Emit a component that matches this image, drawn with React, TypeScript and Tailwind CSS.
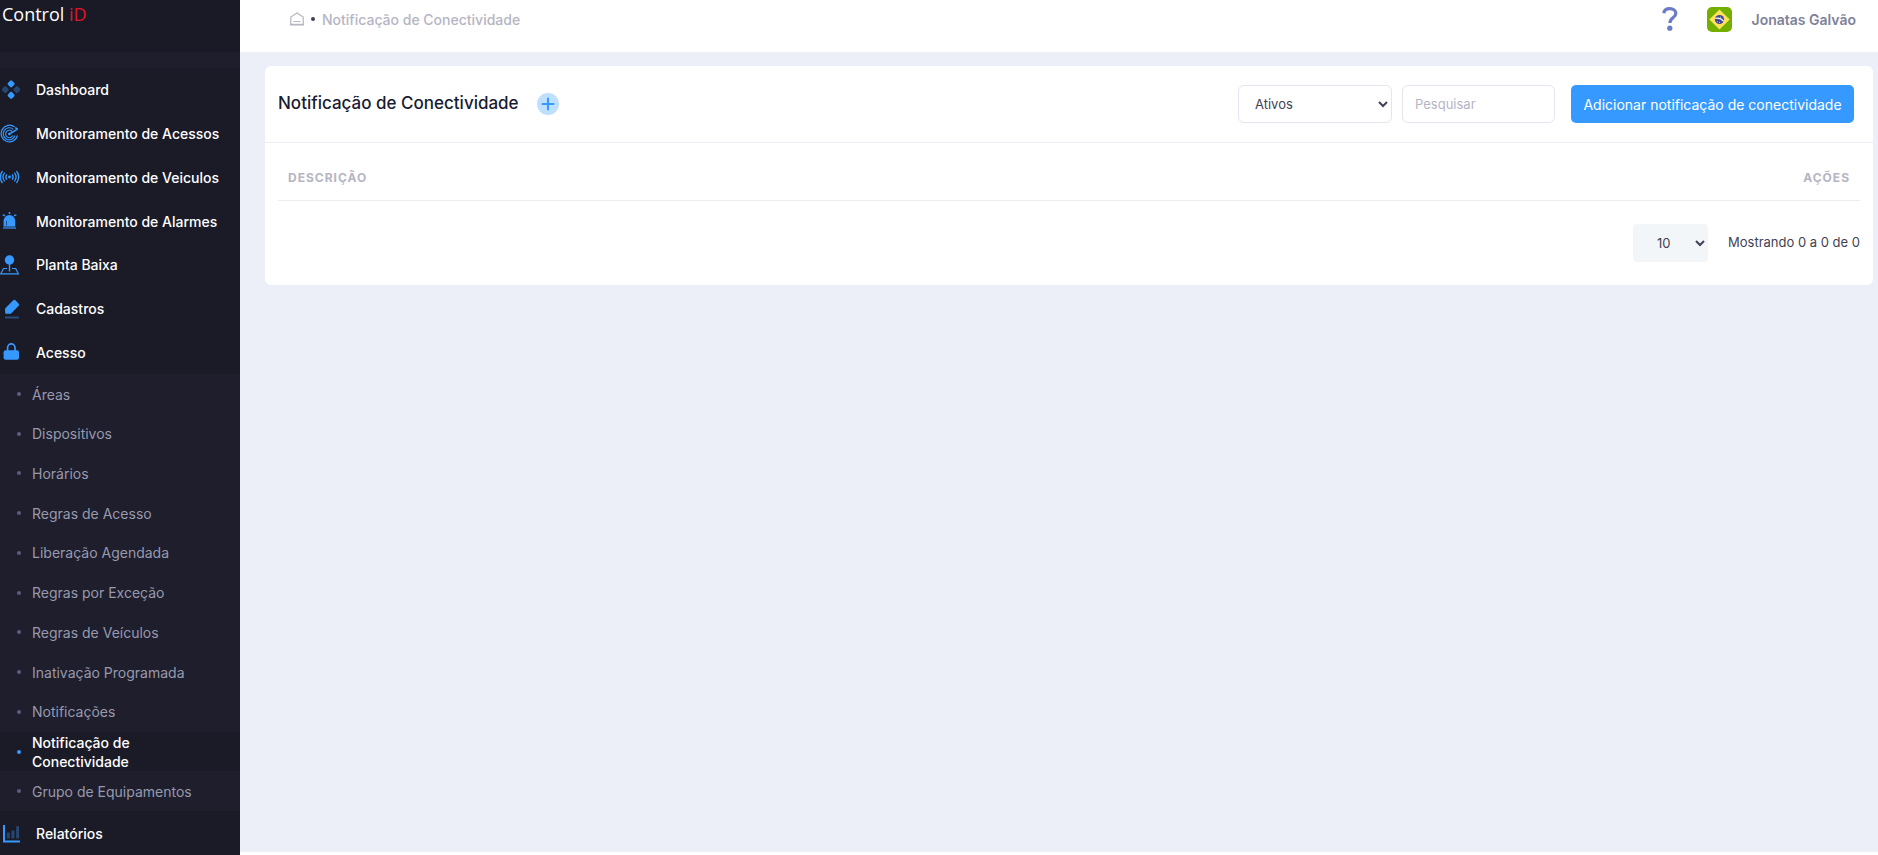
import React, { useState } from "react";
import type { ReactNode } from "react";

type MenuItem = {
  label: string;
  icon: ReactNode;
};

function DashboardIcon() {
  return (
    <svg viewBox="0 0 20 20" className="h-5 w-5" fill="#3699ff">
      <rect x="8.2" y="1" width="5.8" height="5.8" rx="1.6" transform="rotate(45 11.1 3.9)" />
      <rect x="8.2" y="12.4" width="5.8" height="5.8" rx="1.6" transform="rotate(45 11.1 15.3)" />
      <rect x="2.4" y="6.7" width="5.8" height="5.8" rx="1.6" transform="rotate(45 5.3 9.6)" opacity=".35" />
      <rect x="14" y="6.7" width="5.8" height="5.8" rx="1.6" transform="rotate(45 16.9 9.6)" opacity=".35" />
    </svg>
  );
}

function RadarIcon() {
  return (
    <svg viewBox="0 0 20 20" className="h-5 w-5" fill="none" stroke="#3699ff">
      <path d="M14.6 3A8.300 8.300 0 1 0 17.500 11.500" strokeWidth="1.200" />
      <path d="M13.300 5.300A6 6 0 1 0 15 11.500" strokeWidth="1.100" />
      <path d="M12 7.400A3.700 3.700 0 1 0 12.700 11.500" strokeWidth="1.100" />
      <path d="M9.300 10 17.600 5.200 M15.200 3.600 17.800 5.200" strokeWidth="1.500" />
      <circle cx="9.300" cy="10" r="1.300" fill="#3699ff" stroke="none" />
    </svg>
  );
}

function SignalIcon() {
  return (
    <svg viewBox="0 0 20 20" className="h-5 w-5" fill="none" stroke="#3699ff" strokeWidth="1.300">
      <circle cx="9.500" cy="10" r="1.400" fill="#3699ff" stroke="none" />
      <path d="M6.900 7.300a4.400 4.400 0 0 0 0 5.400M12.100 7.300a4.400 4.400 0 0 1 0 5.400" />
      <path d="M4.700 5.600a7 7 0 0 0 0 8.800M14.300 5.600a7 7 0 0 1 0 8.800" />
      <path d="M2.500 4a9.500 9.500 0 0 0 0 12M16.500 4a9.500 9.500 0 0 1 0 12" />
    </svg>
  );
}

function AlarmIcon() {
  return (
    <svg viewBox="0 0 20 20" className="h-5 w-5" fill="#3699ff">
      <path d="M3.600 15.500V9.800a5.800 5.800 0 0 1 11.600 0v5.700z" />
      <path d="M6.500 14.500v-4.500" stroke="#1b1b28" strokeWidth="1" opacity=".6" />
      <rect x="3" y="15.800" width="13" height="2.200" opacity=".6" />
      <path d="M9.500 1v2M3.400 3.600l1.400 1.400M15.600 3.600l-1.400 1.400" stroke="#3699ff" strokeWidth="1.500" />
      <path d="M2 4.200h2M15 4.200h2" stroke="#3699ff" opacity=".5" />
    </svg>
  );
}

function PlanIcon() {
  return (
    <svg viewBox="0 0 20 20" className="h-5 w-5" fill="none" stroke="#3699ff" strokeWidth="1.200">
      <circle cx="9.500" cy="5" r="4.700" fill="#3699ff" stroke="none" />
      <path d="M9.500 9v7.500" strokeWidth="1.400" />
      <path d="M7 13.500H3.500L.8 18.800h17.600l-2.700-5.300H12" />
    </svg>
  );
}

function PencilIcon() {
  return (
    <svg viewBox="0 0 20 20" className="h-5 w-5" fill="#3699ff">
      <path d="M5.300 9.200 13.300 1.300a1.500 1.500 0 0 1 2.100 0l3.300 3.400a1.500 1.500 0 0 1 0 2.100l-7.800 8H6.400a1.200 1.200 0 0 1-1.300-1.300V9.800z" />
      <rect x="5" y="17.400" width="14" height="2" rx=".5" opacity=".4" />
    </svg>
  );
}

function LockIcon() {
  return (
    <svg viewBox="0 0 20 20" className="h-5 w-5" fill="#3699ff">
      <path d="M7.600 9.500V5.600a3.700 3.700 0 0 1 7.400 0v3.900" fill="none" stroke="#3699ff" strokeWidth="1.700" />
      <rect x="3.600" y="8.200" width="15.400" height="9.600" rx="2" />
    </svg>
  );
}

function ChartIcon() {
  return (
    <svg viewBox="0 0 20 20" className="h-5 w-5" fill="#3699ff">
      <path d="M3 2h2v15.400h15v2H3z" />
      <g opacity=".35">
        <rect x="6.800" y="9.600" width="3" height="5.800" rx="1" />
        <rect x="11.400" y="7.400" width="3" height="8" rx="1" />
        <rect x="16.200" y="3" width="2.800" height="12.400" rx="1" />
      </g>
    </svg>
  );
}

function HomeIcon() {
  return (
    <svg viewBox="0 0 14 14" className="h-3.5 w-3.5" fill="none" stroke="#b5b5c3">
      <path d="M.8 12.600V5L7 1l6.200 4v7.600z" strokeWidth="1.200" />
      <path d="M.2 12.600h13.600" strokeWidth="1.600" />
      <path d="M3.500 9.500h7" />
    </svg>
  );
}

function BrazilFlag() {
  return (
    <svg viewBox="0 0 25 25" className="h-[25px] w-[25px] rounded-[5px]">
      <rect width="25" height="25" fill="#73af00" />
      <path d="M12.500 2.500 22.700 12.500 12.500 22.500 2.300 12.500z" fill="#ffe15a" />
      <circle cx="12.500" cy="12.500" r="4.600" fill="#41479b" />
      <path d="M8.200 11.300c3-.7 6.400.4 8.500 3" fill="none" stroke="#f5f5f5" strokeWidth="1.200" />
      <path d="M9.800 14.800h1M12 15.500h1M13 10.200h1" stroke="#f5f5f5" strokeWidth=".7" />
    </svg>
  );
}

const mainItems: MenuItem[] = [
  { label: "Dashboard", icon: <DashboardIcon /> },
  { label: "Monitoramento de Acessos", icon: <RadarIcon /> },
  { label: "Monitoramento de Veiculos", icon: <SignalIcon /> },
  { label: "Monitoramento de Alarmes", icon: <AlarmIcon /> },
  { label: "Planta Baixa", icon: <PlanIcon /> },
  { label: "Cadastros", icon: <PencilIcon /> },
  { label: "Acesso", icon: <LockIcon /> },
];

const accessItems = [
  "Áreas",
  "Dispositivos",
  "Horários",
  "Regras de Acesso",
  "Liberação Agendada",
  "Regras por Exceção",
  "Regras de Veículos",
  "Inativação Programada",
  "Notificações",
  "Notificação de Conectividade",
  "Grupo de Equipamentos",
];

const activeItem = "Notificação de Conectividade";

function MenuLink({ item }: { item: MenuItem }) {
  return (
    <a
      href="#"
      className="flex grow basis-[43px] items-center gap-4 bg-[#1b1b28] text-[14px] font-medium text-white"
    >
      {item.icon}
      {item.label}
    </a>
  );
}

function SubMenuLink({ label }: { label: string }) {
  const active = label === activeItem;
  return (
    <a
      href="#"
      className={`flex grow basis-[39px] items-center gap-[11px] pl-[17px] text-[14px] leading-[19px] ${
        active ? "bg-[#1b1b28] font-medium text-white" : "text-[#9899ac]"
      }`}
    >
      <span className={`h-1 w-1 shrink-0 rounded-full ${active ? "bg-[#3699ff]" : "bg-[#5c5e81]"}`} />
      <span className={active ? "w-32" : ""}>{label}</span>
    </a>
  );
}

function Sidebar() {
  return (
    <aside className="flex w-60 shrink-0 flex-col bg-[#1e1e2d]">
      <div className="h-13 bg-[#1a1a27] pl-0.5 font-['Open_Sans',sans-serif] text-[18px] leading-[29px] text-white">
        Control <span className="text-[#e3122c]">iD</span>
      </div>
      <nav className="flex grow flex-col pt-4">
        {mainItems.map((item) => (
          <MenuLink key={item.label} item={item} />
        ))}
        {accessItems.map((label) => (
          <SubMenuLink key={label} label={label} />
        ))}
        <MenuLink item={{ label: "Relatórios", icon: <ChartIcon /> }} />
      </nav>
    </aside>
  );
}

function Topbar() {
  return (
    <header className="flex h-13 items-start justify-between bg-white pr-[22px] pl-[50px]">
      <div className="flex h-[38px] items-center text-[14px] font-medium text-[#b5b5c3]">
        <a href="#" aria-label="Início">
          <HomeIcon />
        </a>
        <span className="mx-[7px] h-1 w-1 rounded-full bg-[#3f4254]" />
        <a href="#">Notificação de Conectividade</a>
      </div>
      <div className="flex h-[38px] items-center">
        <button type="button" aria-label="Ajuda" className="mr-[29px]">
          <svg viewBox="0 0 16 24" className="h-6 w-4" fill="none" stroke="#6c7bc5" strokeWidth="3.200">
            <path d="M1.800 6.200C2.200 3 4.500 1.700 7.800 1.700c3.500 0 6 1.700 6 4.700 0 4.500-5.900 4.500-5.900 9.600" />
            <circle cx="7.800" cy="21.200" r="2.600" fill="#6c7bc5" stroke="none" />
          </svg>
        </button>
        <button type="button" aria-label="Idioma">
          <BrazilFlag />
        </button>
        <span className="ml-5 text-[14px] font-semibold text-[#7e8299]">Jonatas Galvão</span>
      </div>
    </header>
  );
}

export default function App() {
  const [status, setStatus] = useState("Ativos");
  const [search, setSearch] = useState("");
  const [pageSize, setPageSize] = useState("10");

  return (
    <div className="flex min-h-screen bg-white font-['Inter',sans-serif] text-[#3f4254]">
      <Sidebar />

      <div className="flex min-w-0 grow flex-col">
        <Topbar />

        <main className="mb-[3px] grow bg-[#eceff8] pt-3.5 pr-[5px] pl-[25px]">
          <section className="rounded-md bg-white pb-[23px]">
            {/* Card header */}
            <div className="flex items-center border-b border-[#ebedf3] py-[19px] pr-[19px] pl-[13px]">
              <h1 className="text-[17px] font-medium text-[#181c32]">Notificação de Conectividade</h1>
              <button
                type="button"
                aria-label="Adicionar"
                className="ml-[18px] flex h-[22px] w-[22px] items-center justify-center rounded-full bg-[#bfdfff]"
              >
                <svg viewBox="0 0 14 14" className="h-3.5 w-3.5" stroke="#3699ff" strokeWidth="2" strokeLinecap="round">
                  <path d="M7 1.500v11M1.500 7h11" />
                </svg>
              </button>

              <div className="ml-auto flex items-center">
                <select
                  aria-label="Status"
                  value={status}
                  onChange={(e) => setStatus(e.target.value)}
                  className="h-[38px] w-[154px] rounded-md border border-[#e4e6ef] bg-white pl-3 text-[13px]"
                >
                  <option>Ativos</option>
                  <option>Inativos</option>
                  <option>Todos</option>
                </select>
                <input
                  type="text"
                  aria-label="Pesquisar"
                  placeholder="Pesquisar"
                  value={search}
                  onChange={(e) => setSearch(e.target.value)}
                  className="ml-2.5 h-[38px] w-[153px] rounded-md border border-[#e4e6ef] px-3 text-[13px] placeholder:text-[#b5b5c3]"
                />
                <button type="button" className="ml-4 h-[38px] w-[283px] rounded-[5px] bg-[#3699ff] text-[14px] text-white">
                  Adicionar notificação de conectividade
                </button>
              </div>
            </div>

            {/* Table */}
            <div className="pr-[13px] pl-[13px]">
              <table className="w-full border-b border-[#ebedf3] text-[12px] font-semibold text-[#b5b5c3] uppercase">
                <thead>
                  <tr className="h-[57px]">
                    <th className="px-2.5 pt-3.5 text-left tracking-[1px]">Descrição</th>
                    <th className="px-2.5 pt-3.5 text-right tracking-[1px]">Ações</th>
                  </tr>
                </thead>
              </table>

              {/* Pagination */}
              <div className="mt-[23px] flex items-center justify-end gap-5 text-[13px]">
                <select
                  aria-label="Itens por página"
                  value={pageSize}
                  onChange={(e) => setPageSize(e.target.value)}
                  className="h-[38px] w-[75px] rounded bg-[#f3f6f9] pl-5 text-[13px]"
                >
                  <option>10</option>
                  <option>25</option>
                  <option>50</option>
                </select>
                <span>Mostrando 0 a 0 de 0</span>
              </div>
            </div>
          </section>
        </main>
      </div>
    </div>
  );
}
